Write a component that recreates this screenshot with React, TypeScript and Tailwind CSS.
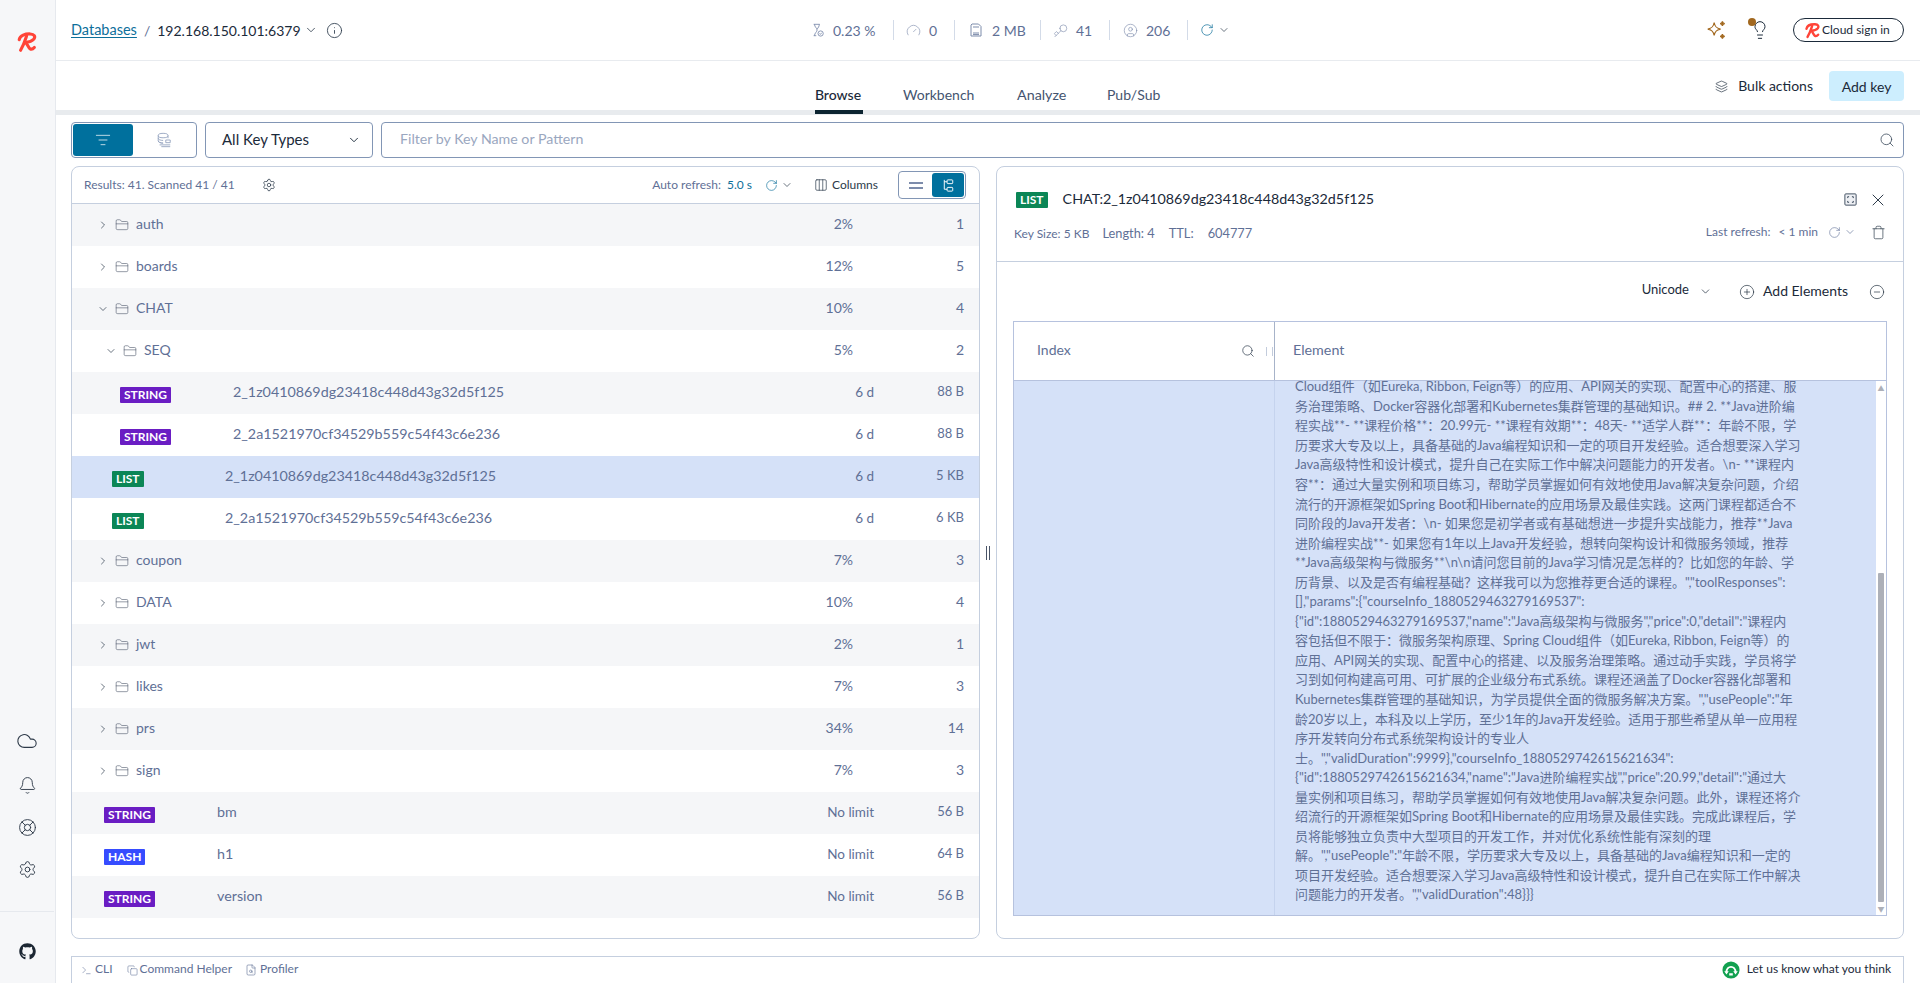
import React from "react";
import {
  ChevronRight, ChevronDown, FolderClosed, Info, ListFilter, Search, Settings, RotateCw, Columns3, X, Trash, CirclePlus, CircleMinus,
  Cloud, Bell, LifeBuoy, Layers, Key, CircleUser, Gauge, Lightbulb, Terminal, Copy, FileSearch,
} from "lucide-react";
import { FaGithub } from "react-icons/fa";

const textCol = "text-[#5f7096]";

function Logo({ className }: { className?: string }) {
  return (
    <svg viewBox="0 0 24 24" className={className} fill="none" stroke="#ff4438" strokeWidth="3.4" strokeLinecap="round" strokeLinejoin="round">
      <path d="M3.5 9.5C4.5 5 10 3 15.5 3.2c4.5.2 6 3 4 5.6-2 2.4-6 3.4-9.5 3.6" />
      <path d="M11.5 5.5C10 10 8.5 15 5 21" />
      <path d="M10 12.4c2.5 1.4 3.4 5.6 5.2 6.9 1.6 1.1 3.4.3 4.8-1.3" />
    </svg>
  );
}

function Badge({ type }: { type: string }) {
  const bg = type === "STRING" ? "bg-[#6a1dc3]" : type === "LIST" ? "bg-[#0b8656]" : "bg-[#364cff]";
  return (
    <span className={`${bg} inline-flex h-4 items-center rounded-[1px] px-1 text-[12px] font-bold leading-4 text-white`}>{type}</span>
  );
}

type Row =
  | { kind: "folder"; name: string; depth: 0 | 1; open?: boolean; pct: string; n: string }
  | { kind: "key"; type: string; name: string; indent: 0 | 1 | 2; ttl: string; size: string; selected?: boolean };

const rows: Row[] = [
  { kind: "folder", name: "auth", depth: 0, pct: "2%", n: "1" },
  { kind: "folder", name: "boards", depth: 0, pct: "12%", n: "5" },
  { kind: "folder", name: "CHAT", depth: 0, open: true, pct: "10%", n: "4" },
  { kind: "folder", name: "SEQ", depth: 1, open: true, pct: "5%", n: "2" },
  { kind: "key", type: "STRING", name: "2_1z0410869dg23418c448d43g32d5f125", indent: 2, ttl: "6 d", size: "88 B" },
  { kind: "key", type: "STRING", name: "2_2a1521970cf34529b559c54f43c6e236", indent: 2, ttl: "6 d", size: "88 B" },
  { kind: "key", type: "LIST", name: "2_1z0410869dg23418c448d43g32d5f125", indent: 1, ttl: "6 d", size: "5 KB", selected: true },
  { kind: "key", type: "LIST", name: "2_2a1521970cf34529b559c54f43c6e236", indent: 1, ttl: "6 d", size: "6 KB" },
  { kind: "folder", name: "coupon", depth: 0, pct: "7%", n: "3" },
  { kind: "folder", name: "DATA", depth: 0, pct: "10%", n: "4" },
  { kind: "folder", name: "jwt", depth: 0, pct: "2%", n: "1" },
  { kind: "folder", name: "likes", depth: 0, pct: "7%", n: "3" },
  { kind: "folder", name: "prs", depth: 0, pct: "34%", n: "14" },
  { kind: "folder", name: "sign", depth: 0, pct: "7%", n: "3" },
  { kind: "key", type: "STRING", name: "bm", indent: 0, ttl: "No limit", size: "56 B" },
  { kind: "key", type: "HASH", name: "h1", indent: 0, ttl: "No limit", size: "64 B" },
  { kind: "key", type: "STRING", name: "version", indent: 0, ttl: "No limit", size: "56 B" },
];

const lines = [
  "Cloud组件（如Eureka, Ribbon, Feign等）的应用、API网关的实现、配置中心的搭建、服",
  "务治理策略、Docker容器化部署和Kubernetes集群管理的基础知识。## 2. **Java进阶编",
  "程实战**- **课程价格**：20.99元- **课程有效期**：48天- **适学人群**：年龄不限，学",
  "历要求大专及以上，具备基础的Java编程知识和一定的项目开发经验。适合想要深入学习",
  "Java高级特性和设计模式，提升自己在实际工作中解决问题能力的开发者。\\n- **课程内",
  "容**：通过大量实例和项目练习，帮助学员掌握如何有效地使用Java解决复杂问题，介绍",
  "流行的开源框架如Spring Boot和Hibernate的应用场景及最佳实践。这两门课程都适合不",
  "同阶段的Java开发者：\\n- 如果您是初学者或有基础想进一步提升实战能力，推荐**Java",
  "进阶编程实战**- 如果您有1年以上Java开发经验，想转向架构设计和微服务领域，推荐",
  "**Java高级架构与微服务**\\n\\n请问您目前的Java学习情况是怎样的？比如您的年龄、学",
  "历背景、以及是否有编程基础？这样我可以为您推荐更合适的课程。\",\"toolResponses\":",
  "[],\"params\":{\"courseInfo_1880529463279169537\":",
  "{\"id\":1880529463279169537,\"name\":\"Java高级架构与微服务\",\"price\":0,\"detail\":\"课程内",
  "容包括但不限于：微服务架构原理、Spring Cloud组件（如Eureka, Ribbon, Feign等）的",
  "应用、API网关的实现、配置中心的搭建、以及服务治理策略。通过动手实践，学员将学",
  "习到如何构建高可用、可扩展的企业级分布式系统。课程还涵盖了Docker容器化部署和",
  "Kubernetes集群管理的基础知识，为学员提供全面的微服务解决方案。\",\"usePeople\":\"年",
  "龄20岁以上，本科及以上学历，至少1年的Java开发经验。适用于那些希望从单一应用程",
  "序开发转向分布式系统架构设计的专业人",
  "士。\",\"validDuration\":9999},\"courseInfo_1880529742615621634\":",
  "{\"id\":1880529742615621634,\"name\":\"Java进阶编程实战\",\"price\":20.99,\"detail\":\"通过大",
  "量实例和项目练习，帮助学员掌握如何有效地使用Java解决复杂问题。此外，课程还将介",
  "绍流行的开源框架如Spring Boot和Hibernate的应用场景及最佳实践。完成此课程后，学",
  "员将能够独立负责中大型项目的开发工作，并对优化系统性能有深刻的理",
  "解。\",\"usePeople\":\"年龄不限，学历要求大专及以上，具备基础的Java编程知识和一定的",
  "项目开发经验。适合想要深入学习Java高级特性和设计模式，提升自己在实际工作中解决",
  "问题能力的开发者。\",\"validDuration\":48}}}",
];

function Stat({ icon, label, w }: { icon: React.ReactNode; label: string; w: string }) {
  return (
    <div className={`flex h-5 items-center gap-2 border-r border-[#d3dbe8] ${w} text-[14px] text-[#5f7096]`}>
      {icon}
      <span>{label}</span>
    </div>
  );
}

function MemoryIcon() {
  return (
    <svg viewBox="0 0 16 16" className="h-4 w-4" fill="none" stroke="#7d8cab" strokeWidth="1">
      <path d="M4 2h6.5L13 4.5V14H3V3z" />
      <path d="M5 11h6M5 12.6h6M6 4v2M8 4v2M10 4v2" />
    </svg>
  );
}

function HourglassCheck() {
  return (
    <svg viewBox="0 0 16 16" className="h-4 w-[14px]" fill="none" stroke="#7d8cab" strokeWidth="1">
      <path d="M3 1.5h7M3 14.5h3M4 1.5c0 3 3 4.500 3 6.500S4 11.500 4 14.500M9.500 1.500c0 2.500-1.500 4-2.500 5.500" />
      <circle cx="11" cy="12" r="3" />
      <path d="M9.700 12l1 1 1.500-1.800" />
    </svg>
  );
}

function StackSearch() {
  return (
    <svg viewBox="0 0 18 18" className="h-4 w-4" fill="none" stroke="#94a3bf" strokeWidth="1">
      <ellipse cx="8" cy="4" rx="5.500" ry="2.500" />
      <path d="M2.500 4v6c0 1.400 2.500 2.500 5.500 2.500M13.500 4v3" />
      <path d="M2.500 7c0 1.400 2.500 2.500 5.500 2.500M2.500 10c0 1.400 2.500 2.500 5.500 2.500" />
      <path d="M4 14.500h12M6 16.500h10M11 9h5v3h-5z" />
    </svg>
  );
}

export default function App() {
  return (
    <div className="flex h-screen w-full overflow-hidden bg-white font-['Lato','Noto_Sans_CJK_SC',sans-serif] text-[#0f2537]">
      {/* sidebar */}
      <aside className="flex w-[56px] shrink-0 flex-col items-center border-r border-[#e6e9ee] bg-[#f6f7f9] pr-[1px]">
        <div className="mt-[31px]"><Logo className="h-[22px] w-[22px]" /></div>
        <div className="flex-1" />
        <div className="flex flex-col items-center gap-[23px] pb-[32px] text-[#2f3b4a]">
          <Cloud size={22} strokeWidth={1.2} className="mb-[1px]" />
          <Bell size={19} strokeWidth={1.2} />
          <LifeBuoy size={19} strokeWidth={1.2} />
          <Settings size={19} strokeWidth={1.2} />
        </div>
        <div className="flex h-[72px] w-full justify-center border-t border-[#e6e9ee] pt-[31px] text-[#1c2733]">
          <FaGithub size={17} />
        </div>
      </aside>

      <main className="flex min-w-0 flex-1 flex-col">
        {/* top bar */}
        <header className="flex h-[61px] shrink-0 items-center border-b border-[#e8ebef] pl-[15px] pr-4">
          <div className="flex w-[740px] items-center text-[14px]">
            <span className="text-[14.500px] text-[#0d6f9a] underline underline-offset-2">Databases</span>
            <span className="mx-[7px] text-[#5f7096]">/</span>
            <span className="text-[#1b2a3a]">192.168.150.101:6379</span>
            <ChevronDown size={14} strokeWidth={1.4} className="ml-[3px] text-[#2b3a4a]" />
            <Info size={17} strokeWidth={1.2} className="ml-[8px] text-[#2b3a4a]" />
          </div>
          <div className="flex items-center">
            <Stat w="w-[83px]" icon={<HourglassCheck />} label="0.23 %" />
            <Stat w="w-[61px] pl-[12px]" icon={<Gauge size={15} strokeWidth={1} className="text-[#7d8cab]" />} label="0" />
            <Stat w="w-[86px] pl-[13px]" icon={<MemoryIcon />} label="2 MB" />
            <Stat w="w-[69px] pl-[12px]" icon={<Key size={15} strokeWidth={1} className="rotate-180 text-[#7d8cab]" />} label="41" />
            <Stat w="w-[78px] pl-[13px]" icon={<CircleUser size={15} strokeWidth={1} className="text-[#7d8cab]" />} label="206" />
            <RotateCw size={14} strokeWidth={1.2} className="ml-[12px] text-[#0d6f9a]" />
            <ChevronDown size={12} strokeWidth={1.4} className="ml-[4px] text-[#2b3a4a]" />
          </div>
          <div className="flex-1" />
          <svg viewBox="0 0 24 24" className="h-[22px] w-[22px]" fill="none" stroke="#a2681f" strokeWidth="1.3">
            <path d="M10 4c.8 4.6 2.4 6.2 7 7-4.6.8-6.2 2.4-7 7-.8-4.6-2.4-6.2-7-7 4.6-.8 6.2-2.4 7-7z" />
            <path d="M19 2.5c.3 1.7.8 2.2 2.5 2.5-1.7.3-2.2.8-2.5 2.5-.3-1.7-.8-2.2-2.5-2.5 1.7-.3 2.2-.8 2.5-2.5zM19 16.5c.3 1.7.8 2.2 2.5 2.5-1.7.3-2.2.8-2.5 2.5-.3-1.7-.8-2.2-2.5-2.5 1.7-.3 2.2-.8 2.5-2.5z" fill="#a2681f" />
          </svg>
          <div className="relative ml-[23px] text-[#1b2a3a]">
            <Lightbulb size={20} strokeWidth={1.2} />
            <span className="absolute -left-[2px] -top-[2px] h-2 w-2 rounded-full bg-[#a2681f]" />
          </div>
          <div className="ml-[23px] flex h-6 w-[111px] items-center rounded-full border border-[#1b2a3a] pl-[10px] text-[12px] text-[#1b2a3a]">
            <Logo className="mr-[1px] h-[17px] w-[17px]" />
            Cloud sign in
          </div>
        </header>

        {/* tabs */}
        <div className="flex h-[49px] shrink-0 items-end">
          <nav className="ml-[758px] flex items-end text-[14px] text-[#44546f]">
            <div className="mb-[5px] w-[48px] text-center font-medium text-[#1b2a3a]">Browse</div>
            <div className="mb-[5px] ml-[41px] w-[73px]">Workbench</div>
            <div className="mb-[5px] ml-[41px] w-[49px] text-[14.300px]">Analyze</div>
            <div className="mb-[5px] ml-[41px]">Pub/Sub</div>
          </nav>
          <div className="flex-1" />
          <div className="mb-[9px] mr-4 flex items-center text-[14px] text-[#1b2a3a]">
            <Layers size={13} strokeWidth={1.2} className="mr-[10px]" />
            <span className="pb-[2px]">Bulk actions</span>
            <span className="ml-4 flex h-[30px] w-[75px] items-center justify-center rounded-[4px] bg-[#cdeefe]">Add key</span>
          </div>
        </div>
        <div className="flex h-[5px] shrink-0 bg-[#e8ebee]">
          <div className="ml-[759px] h-1 w-[48px] bg-[#0c2431]" />
        </div>

        {/* content */}
        <div className="flex min-h-0 flex-1 flex-col bg-white pl-[15px] pr-4">
          <div className="mt-[7px] flex h-9 shrink-0 gap-2">
            <div className="flex w-[126px] rounded-[4px] border border-[#8296b5] p-[1px]">
              <div className="flex w-[60px] items-center justify-center rounded-[3px] bg-[#00709d] text-white"><ListFilter size={16} strokeWidth={1.1} /></div>
              <div className="flex flex-1 items-center justify-center"><StackSearch /></div>
            </div>
            <div className="flex w-[168px] items-center justify-between rounded-[4px] border border-[#8296b5] pl-4 pr-[11px] text-[15px] text-[#1b2a3a]">
              <span className="pb-[2px]">All Key Types</span>
              <ChevronDown size={14} strokeWidth={1.6} />
            </div>
            <div className="flex flex-1 items-center justify-between rounded-[4px] border border-[#8296b5] pl-[18px] pr-2 text-[14.200px] text-[#9aa7c0]">
              <span className="pb-[2px]">Filter by Key Name or Pattern</span>
              <Search size={16} strokeWidth={1.2} className="text-[#3b4a5c]" />
            </div>
          </div>

          <div className="mt-2 flex h-[773px] shrink-0">
            {/* left */}
            <section className="flex w-[909px] flex-col overflow-hidden rounded-[8px] border border-[#c5cfdf]">
              <div className="flex h-[37px] shrink-0 items-center border-b border-[#c5cfdf] pl-3 pr-[13px] text-[12px] text-[#5f7096]">
                <span className="w-[178px]">Results: 41. Scanned 41 / 41</span>
                <Settings size={14} strokeWidth={1.3} className="text-[#2b3a4a]" />
                <div className="flex-1" />
                <span>Auto refresh:</span>
                <span className="ml-[6px] text-[#0d6f9a]">5.0 s</span>
                <RotateCw size={13} strokeWidth={1.2} className="ml-[13px] text-[#0d6f9a]" />
                <ChevronDown size={12} strokeWidth={1.4} className="ml-[3px] text-[#2b3a4a]" />
                <Columns3 size={14} strokeWidth={1.2} className="ml-[21px] text-[#2b3a4a]" />
                <span className="ml-[4px] text-[#2b3a4a]">Columns</span>
                <div className="ml-[20px] flex h-7 w-[68px] items-center rounded-[4px] border border-[#8296b5] p-[1px]">
                  <div className="flex flex-1 items-center justify-center">
                    <span className="h-[7px] w-[14px] border-y-2 border-[#7d8cab]" />
                  </div>
                  <div className="flex h-full w-8 items-center justify-center rounded-[3px] bg-[#00709d] text-white">
                    <svg viewBox="0 0 16 16" className="h-[15px] w-[15px]" fill="none" stroke="currentColor" strokeWidth="1">
                      <rect x="6.5" y="2" width="6" height="4" rx=".8" /><rect x="6.5" y="10" width="6" height="4" rx=".8" /><path d="M3.5 2v10h3M3.5 4h3" />
                    </svg>
                  </div>
                </div>
              </div>
              <div className="flex-1 overflow-hidden">
                {rows.map((r, i) => {
                  const bg = r.kind === "key" && r.selected ? "bg-[#d5e1f8]" : i % 2 === 0 ? "bg-[#f5f6f8]" : "bg-white";
                  return (
                    <div key={i} className={`flex h-[42px] items-center pr-[15px] text-[14px] ${textCol} ${bg}`}>
                      {r.kind === "folder" ? (
                        <div className={`flex items-center ${r.depth === 1 ? "pl-[33px]" : "pl-[25px]"}`}>
                          {r.open ? <ChevronDown size={12} strokeWidth={1.4} className="text-[#2b3a4a]" /> : <ChevronRight size={12} strokeWidth={1.4} className="text-[#2b3a4a]" />}
                          <FolderClosed size={14} strokeWidth={1} className="ml-[6px] text-[#4a5568]" />
                          <span className="ml-[7px] pb-[3px]">{r.name}</span>
                        </div>
                      ) : (
                        <div className={`flex items-center ${r.indent === 2 ? "pl-[48px]" : r.indent === 1 ? "pl-[40px]" : "pl-[32px]"}`}>
                          <div className="w-[113px]"><Badge type={r.type} /></div>
                          <span className="pb-[3px] text-[14.300px]">{r.name}</span>
                        </div>
                      )}
                      <div className="flex-1" />
                      {r.kind === "folder" ? (
                        <>
                          <span className="w-[80px] pb-[3px] text-right">{r.pct}</span>
                          <span className="w-[111px] pb-[3px] text-right">{r.n}</span>
                        </>
                      ) : (
                        <>
                          <span className="w-[80px] pb-[2px] text-right text-[13.500px]">{r.ttl}</span>
                          <span className="w-[90px] pb-[2px] text-right text-[13px]">{r.size}</span>
                        </>
                      )}
                    </div>
                  );
                })}
              </div>
            </section>

            {/* divider */}
            <div className="flex w-4 shrink-0 items-center justify-center">
              <span className="h-[14px] w-[4px] border-x border-[#4a5568]" />
            </div>

            {/* right */}
            <section className="flex min-w-0 flex-1 flex-col overflow-hidden rounded-[8px] border border-[#c5cfdf]">
              <div className="flex h-[95px] shrink-0 flex-col border-b border-[#c5cfdf] pl-[17px] pr-[17px]">
                <div className="mt-[21px] flex items-center">
                  <span className="ml-[2px] flex"><Badge type="LIST" /></span>
                  <span className="ml-[15px] pb-[2px] text-[14.300px] text-[#1b2a3a]">CHAT:2_1z0410869dg23418c448d43g32d5f125</span>
                  <div className="flex-1" />
                  <svg viewBox="0 0 16 16" className="h-[15px] w-[15px] text-[#3b4a5c]" fill="none" stroke="currentColor" strokeWidth="1">
                    <rect x="2" y="2" width="12" height="12" rx="1" fill="#eef0f4" /><path d="M5 6.5V5h1.5M9.5 5H11v1.5M11 9.5V11H9.5M6.5 11H5V9.5" />
                  </svg>
                  <X size={20} strokeWidth={1.1} className="ml-[10px] -mr-[2px] text-[#1b2a3a]" />
                </div>
                <div className="mt-[13px] flex items-center text-[12px] text-[#5f7096]">
                  <span className="pb-[2px]">Key Size: 5 KB</span>
                  <span className="ml-[13px] pb-[2px] text-[12.800px]">Length: 4</span>
                  <span className="ml-[14px] pb-[2px] text-[12.800px]">TTL:</span>
                  <span className="ml-[14px] pb-[2px] text-[12.800px]">604777</span>
                  <div className="flex-1" />
                  <span className="-mt-[6px]">Last refresh:</span>
                  <span className="-mt-[6px] ml-[8px]">&lt; 1 min</span>
                  <RotateCw size={13} strokeWidth={1.1} className="-mt-[6px] ml-[10px]" />
                  <ChevronDown size={12} strokeWidth={1.3} className="-mt-[6px] ml-[3px]" />
                  <Trash size={15} strokeWidth={1.1} className="-mt-[6px] ml-[15px] text-[#2b3a4a]" />
                </div>
              </div>
              <div className="flex h-[59px] shrink-0 items-center justify-end pr-[18px] text-[14px] text-[#1b2a3a]">
                <span className="pb-[3px] text-[13px]">Unicode</span>
                <ChevronDown size={13} strokeWidth={1.3} className="ml-[10px]" />
                <CirclePlus size={16} strokeWidth={1} className="ml-[27px]" />
                <span className="ml-[8px] pb-[3px] text-[14px]">Add Elements</span>
                <CircleMinus size={16} strokeWidth={1} className="ml-[21px]" />
              </div>
              <div className="mx-[16px] mb-[22px] flex min-h-0 flex-1 flex-col border border-[#b6c2de]">
                <div className="flex h-[59px] shrink-0 border-b border-[#b6c2de] text-[14px] text-[#5f7096]">
                  <div className="flex w-[261px] items-center border-r border-[#a7b3c9] pl-[23px]">
                    <span className="flex-1 pb-[3px]">Index</span>
                    <Search size={14} strokeWidth={1.2} className="text-[#2b3a4a]" />
                    <span className="ml-[11px] mr-[1px] h-[9px] w-[7px] border-x border-[#c3ccdc]" />
                  </div>
                  <div className="flex items-center pb-[3px] pl-[18px] text-[14.300px]">Element</div>
                </div>
                <div className="flex min-h-0 flex-1">
                  <div className="flex min-w-0 flex-1 bg-[#d5e1f8]">
                    <div className="w-[261px] shrink-0 border-r border-[#c5d3ee]" />
                    <div className="flex min-w-0 flex-1 flex-col justify-end pb-[10px] pl-[20px]">
                      <div className="whitespace-nowrap text-[13px] leading-[19.55px] text-[#5f7096]">
                        {lines.map((l, i) => (<div key={i}>{l}</div>))}
                      </div>
                    </div>
                  </div>
                  <div className="flex w-[10px] shrink-0 flex-col items-center bg-white">
                    <span className="mt-[3px] text-[7px] leading-[8px] text-[#adb0b8]">▲</span>
                    <div className="flex-1" />
                    <div className="h-[329px] w-[6px] rounded-[1px] bg-[#adb0b8]" />
                    <span className="mb-[2px] mt-[3px] text-[7px] leading-[8px] text-[#adb0b8]">▼</span>
                  </div>
                </div>
              </div>
            </section>
          </div>

          {/* bottom bar */}
          <div className="mt-[17px] flex h-[27px] shrink-0 items-center border-x border-t border-[#c5cfdf] pl-[9px] pr-[12px] text-[12px] text-[#5f7096]">
            <Terminal size={11} strokeWidth={1.2} />
            <span className="ml-[3px] pb-[2px]">CLI</span>
            <Copy size={11} strokeWidth={1.2} className="ml-[14px]" />
            <span className="ml-[2px] pb-[2px]">Command Helper</span>
            <FileSearch size={12} strokeWidth={1.2} className="ml-[13px]" />
            <span className="ml-[3px] pb-[2px]">Profiler</span>
            <div className="flex-1" />
            <svg viewBox="0 0 20 20" className="h-[18px] w-[18px]">
              <circle cx="10" cy="10" r="9.5" fill="#12a150" />
              <path d="M5 12.500C5 8.500 7.500 6.500 10 6.500s5 2 5 6" fill="none" stroke="#fff" strokeWidth="2" />
              <path d="M2.500 11.500h5L5 15zM12.500 11.500h5L15 15zM8 13.500h4v2.500H8z" fill="#fff" />
            </svg>
            <span className="ml-[7px] pb-[2px] text-[#1b2a3a]">Let us know what you think</span>
          </div>
        </div>
      </main>
    </div>
  );
}
